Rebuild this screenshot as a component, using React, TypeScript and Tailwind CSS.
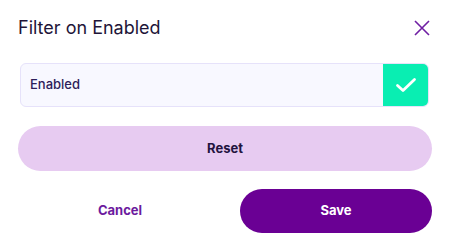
import React from "react";

export default function App() {
  return (
    <div className="w-[450px] h-[252px] bg-white font-['Inter',sans-serif] flex flex-col">
      <div className="flex items-center justify-between pl-[18px] pr-[20px] pt-[15px] h-[40px]">
        <h1 className="text-[18px] leading-[24px] text-[#1e1538] font-normal">Filter on Enabled</h1>
        <svg width="16" height="16" viewBox="0 0 16 16" className="mt-[1px]">
          <path d="M1 1 L15 15 M15 1 L1 15" stroke="#6f1fa3" strokeWidth="1.6" fill="none" />
        </svg>
      </div>
      <div className="mt-[23px] ml-[20px] mr-[21px] h-[44px] flex rounded-[6px] border border-[#e6e2fa] bg-[#f8f8ff] overflow-hidden">
        <div className="flex-1 flex items-center pl-[9px] text-[13px] font-medium text-[#2d1e5a]">Enabled</div>
        <div className="w-[45px] bg-[#09eeb2] flex items-center justify-center">
          <svg width="22" height="18" viewBox="0 0 22 18">
            <path d="M2.5 9.5 L8 14.5 L19.5 3.5" stroke="white" strokeWidth="2.8" fill="none" strokeLinecap="round" strokeLinejoin="round" />
          </svg>
        </div>
      </div>
      <button className="mt-[19px] mx-[18px] h-[45px] rounded-full bg-[#e7cbf1] text-[13px] font-bold text-[#23143f]">Reset</button>
      <div className="mt-[18px] mx-[18px] flex gap-[18px]">
        <button className="flex-1 h-[44px] text-[13px] font-bold text-[#6c1a9e]">Cancel</button>
        <button className="w-[192px] h-[44px] rounded-full bg-[#6a0094] text-[13px] font-bold text-white">Save</button>
      </div>
    </div>
  );
}
